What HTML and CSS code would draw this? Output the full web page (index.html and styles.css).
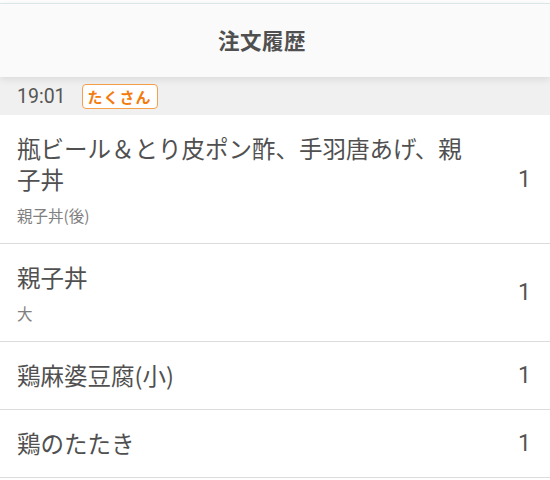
FILE: index.html
```html
<!DOCTYPE html>
<html lang="ja">
<head>
<meta charset="utf-8">
<link rel="stylesheet" href="styles.css">
</head>
<body>
<div class="app">
  <header class="header"><h1 class="title">注文履歴</h1></header>
  <div class="group-head">
    <span class="time">19:01</span>
    <span class="badge">たくさん</span>
  </div>
  <ul class="list">
    <li class="item">
      <div class="info">
        <div class="name">瓶ビール＆とり皮ポン酢、手羽唐あげ、親子丼</div>
        <div class="sub">親子丼(後)</div>
      </div>
      <div class="qty">1</div>
    </li>
    <li class="item">
      <div class="info">
        <div class="name">親子丼</div>
        <div class="sub">大</div>
      </div>
      <div class="qty">1</div>
    </li>
    <li class="item">
      <div class="info">
        <div class="name">鶏麻婆豆腐(小)</div>
      </div>
      <div class="qty">1</div>
    </li>
    <li class="item">
      <div class="info">
        <div class="name">鶏のたたき</div>
      </div>
      <div class="qty">1</div>
    </li>
  </ul>
</div>
</body>
</html>
```
FILE: styles.css
```css
* { box-sizing: border-box; }
html, body { margin: 0; padding: 0; }
body {
  background: #ffffff;
  font-family: "Noto Sans CJK JP", "Noto Sans", sans-serif;
  color: #555555;
  width: 550px;
  height: 480px;
  overflow: hidden;
}
.app { padding-top: 3px; }
.header {
  position: relative;
  z-index: 2;
  height: 74px;
  background: #fafafa;
  border-top: 1px solid #dbe7e7;
  display: flex;
  align-items: center;
  justify-content: center;
  padding-right: 26px;
  padding-bottom: 3px;
  box-shadow: 0 2px 8px rgba(0,0,0,0.10);
}
.title {
  margin: 0;
  font-size: 21.5px;
  font-weight: 700;
  color: #505050;
  letter-spacing: 0.5px;
}
.group-head {
  height: 38px;
  background: #f0f0f0;
  display: flex;
  align-items: center;
  padding-left: 17px;
  gap: 16px;
}
.time {
  font-family: "Roboto", "Noto Sans", sans-serif;
  font-size: 19.5px;
  color: #555555;
}
.badge {
  font-size: 15px;
  font-weight: 700;
  color: #f47b0e;
  background: #ffffff;
  border: 1px solid #f5a04a;
  border-radius: 4px;
  padding: 0 5px;
  line-height: 23px;
  letter-spacing: 1px;
}
.list { list-style: none; margin: 0; padding: 0; }
.item {
  display: flex;
  align-items: center;
  padding: 18px 19px 18px 17px;
  border-bottom: 1px solid #dcdcdc;
}
.info { flex: 1; min-width: 0; padding-right: 40px; }
.name {
  font-size: 23.5px;
  line-height: 31px;
  color: #505050;
}
.sub {
  margin-top: 10px;
  font-size: 15.5px;
  line-height: 20px;
  color: #808080;
}
.qty {
  font-family: "Roboto", "Noto Sans", sans-serif;
  font-size: 23px;
  color: #555555;
}
```
